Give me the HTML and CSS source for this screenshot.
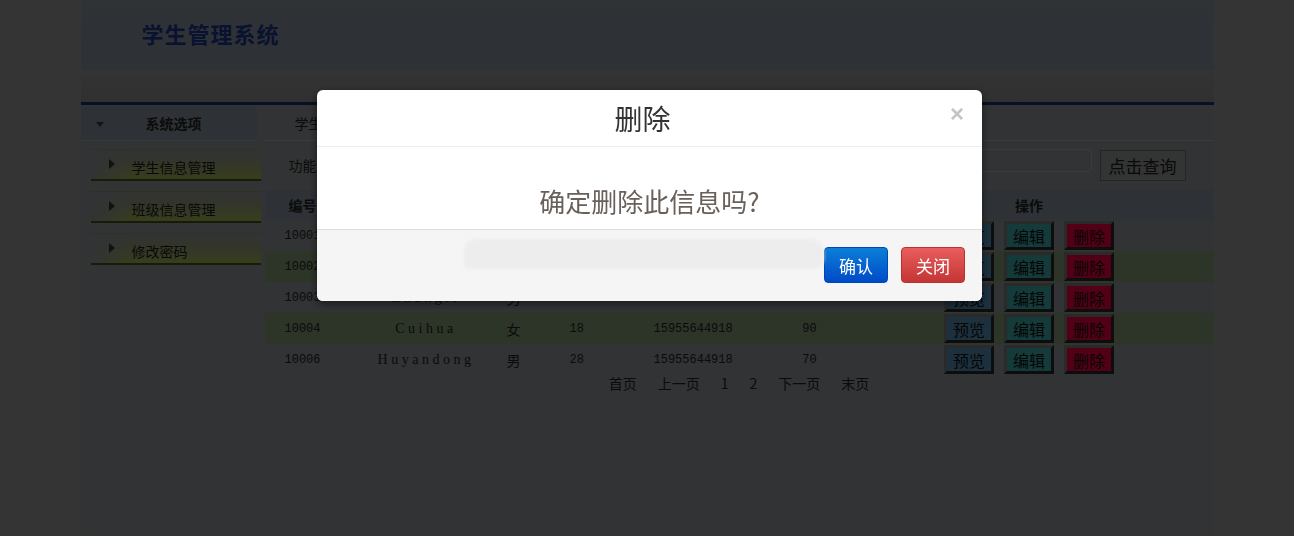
FILE: index.html
```html
<!DOCTYPE html>
<html lang="zh-CN">
<head>
    <meta charset="UTF-8">
    <meta name="viewport" content="width=device-width, initial-scale=1.0">
    <title>学生管理系统</title>
    <link rel="stylesheet" href="styles.css">
</head>
<body>
    <div class="wrap">
        <div class="top"><h1>学生管理系统</h1></div>
        <div class="bar"></div>
        <div class="main">
            <!-- 左侧菜单 -->
            <div class="side">
                <div class="side-head"><span class="down"></span>系统选项</div>
                <ul class="menu">
                    <li>学生信息管理</li>
                    <li>班级信息管理</li>
                    <li>修改密码</li>
                </ul>
            </div>
            <!-- 右侧内容 -->
            <div class="content">
                <div class="tab">学生信息管理</div>
                <div class="search">
                    <span class="tip">功能导航：学生信息列表</span>
                    <input type="text" class="kw">
                    <button class="btn-query">点击查询</button>
                </div>
                <table class="list">
                    <colgroup>
                        <col class="c-id"><col class="c-name"><col class="c-sex"><col class="c-age">
                        <col class="c-tel"><col class="c-score"><col>
                    </colgroup>
                    <tr class="head">
                        <th class="l">编号</th><th>姓名</th><th>性别</th><th class="l">年龄</th>
                        <th class="l">电话</th><th>成绩</th><th class="ops">操作</th>
                    </tr>
                    <tr>
                        <td class="l num">10001</td><td class="name">Zhangsan</td><td>男</td><td class="l num">20</td>
                        <td class="l num">15955644918</td><td class="num score">85</td>
                        <td class="ops"><button class="op see">预览</button><button class="op edit">编辑</button><button class="op del">删除</button></td>
                    </tr>
                    <tr class="alt">
                        <td class="l num">10002</td><td class="name">Lisi</td><td>女</td><td class="l num">19</td>
                        <td class="l num">15955644918</td><td class="num score">88</td>
                        <td class="ops"><button class="op see">预览</button><button class="op edit">编辑</button><button class="op del">删除</button></td>
                    </tr>
                    <tr>
                        <td class="l num">10003</td><td class="name">Zhangli</td><td>男</td><td class="l num">21</td>
                        <td class="l num">15955644918</td><td class="num score">76</td>
                        <td class="ops"><button class="op see">预览</button><button class="op edit">编辑</button><button class="op del">删除</button></td>
                    </tr>
                    <tr class="alt">
                        <td class="l num">10004</td><td class="name">Cuihua</td><td>女</td><td class="l num">18</td>
                        <td class="l num">15955644918</td><td class="num score">90</td>
                        <td class="ops"><button class="op see">预览</button><button class="op edit">编辑</button><button class="op del">删除</button></td>
                    </tr>
                    <tr>
                        <td class="l num">10006</td><td class="name">Huyandong</td><td>男</td><td class="l num">28</td>
                        <td class="l num">15955644918</td><td class="num score">70</td>
                        <td class="ops"><button class="op see">预览</button><button class="op edit">编辑</button><button class="op del">删除</button></td>
                    </tr>
                </table>
                <div class="pager">
                    <a>首页</a><a>上一页</a><a>1</a><a>2</a><a>下一页</a><a>末页</a>
                </div>
            </div>
        </div>
    </div>

    <!-- 删除确认弹窗 -->
    <div class="backdrop"></div>
    <div class="modal">
        <div class="modal-head">
            <h3>删除</h3>
            <span class="close">&times;</span>
        </div>
        <div class="modal-body">确定删除此信息吗?</div>
        <div class="modal-foot">
            <span class="blurred"></span>
            <button class="btn btn-ok">确认</button>
            <button class="btn btn-close">关闭</button>
        </div>
    </div>
</body>
</html>
```

FILE: styles.css
```css
body {
    margin: 0;
    background: #959595;
    font-family: "Noto Sans CJK SC", sans-serif;
    font-size: 14px;
    color: #222;
}
ul {
    margin: 0;
    padding: 0;
    list-style: none;
}
.wrap {
    width: 1133px;
    min-height: 536px;
    margin: 0 auto;
    background: #8e9296;
}

/* 顶部标题 */
.top {
    height: 70px;
    padding-left: 61px;
    background: linear-gradient(#86929c, #84909a);
}
.top h1 {
    margin: 0;
    line-height: 66px;
    font-size: 22px;
    font-weight: bold;
    letter-spacing: 1px;
    color: #1b3684;
}
.bar {
    height: 35px;
    box-sizing: border-box;
    background: linear-gradient(#939393, #8a8a8a);
    border-top: 1px solid #999;
    border-bottom: 3px solid #1c2f66;
}
.main {
    display: flex;
    padding-top: 1px;
}

/* 左侧菜单 */
.side {
    width: 176px;
}
.side-head {
    position: relative;
    height: 34px;
    line-height: 34px;
    padding-left: 10px;
    text-align: center;
    font-weight: bold;
    background: #84919e;
    border-bottom: 1px solid #9aa0a6;
}
.down {
    position: absolute;
    left: 15px;
    top: 16px;
    border: 4px solid transparent;
    border-top: 5px solid #3a3a3a;
}
.menu {
    padding: 0 0 0 10px;
}
.menu li {
    position: relative;
    height: 32px;
    line-height: 34px;
    margin-top: 8px;
    margin-right: -4px;
    padding-left: 41px;
    box-sizing: border-box;
    color: #1a1a1a;
    background:
        linear-gradient(to right, rgba(142, 146, 150, 1), rgba(142, 146, 150, 0) 25%),
        linear-gradient(#8f9290, #939a7a 45%, #9eb050);
    border-top: 1px solid #858f6a;
    border-bottom: 2px solid #3e5419;
}
.menu li + li {
    margin-top: 10px;
}
.menu li::before {
    content: "";
    position: absolute;
    left: 18px;
    top: 9px;
    border: 5px solid transparent;
    border-left: 6px solid #333;
    border-right: 0;
}

/* 右侧内容 */
.content {
    flex: 1;
    margin-left: 8px;
}
.tab {
    height: 34px;
    line-height: 34px;
    padding-left: 30px;
    border-bottom: 1px solid #a4a8ac;
}
.search {
    display: flex;
    align-items: center;
    height: 34px;
    margin-top: 7px;
    padding: 0 28px 0 24px;
}
.tip {
    flex: 1;
}
.kw {
    width: 150px;
    height: 23px;
    margin-top: -10px;
    box-sizing: border-box;
    border: 1px solid #a6aaae;
    border-radius: 4px;
    background: #8e9296;
}
.btn-query {
    width: 86px;
    height: 31px;
    margin-left: 8px;
    font-family: inherit;
    font-size: 17px;
    color: #1a1a1a;
    background: #929496;
    border: 1px solid #6a6a6a;
}

/* 学生列表 */
.list {
    width: 100%;
    margin-top: 8px;
    border-collapse: collapse;
    table-layout: fixed;
}
.c-id { width: 104px; }
.c-name { width: 115px; }
.c-sex { width: 60px; }
.c-age { width: 75px; }
.c-tel { width: 140px; }
.c-score { width: 90px; }
.list th {
    height: 30px;
    padding: 0;
    font-weight: bold;
    background: #83919f;
}
.list td {
    height: 31px;
    padding: 0;
    text-align: center;
}
.list .l {
    text-align: left;
    padding-left: 20px;
}
.list th.l {
    padding-left: 24px;
}
.list td.l + td.l {
    padding-left: 35px;
}
.list td.score {
    padding-left: 12px;
}
.list .ops {
    padding-right: 4px;
}
.list tr.alt td {
    background: #819572;
}
.num {
    font-family: "Liberation Mono", monospace;
    font-size: 12px;
}
.list td.num:nth-child(4) {
    padding-left: 26px;
}
.name {
    font-family: "Liberation Serif", serif;
    font-size: 14px;
    letter-spacing: 3.5px;
}
.op {
    width: 50px;
    height: 29px;
    margin: 0 5px;
    padding: 0;
    vertical-align: middle;
    font-family: inherit;
    font-size: 16px;
    color: #111;
    border: 3px outset #7a7a7a;
}
.see { background: #5089b1; }
.edit { background: #39a6a6; }
.del { background: #ec0040; }
.pager {
    text-align: center;
    line-height: 16px;
}
.pager a {
    margin: 0 10.5px;
}

/* 遮罩与弹窗 */
.backdrop {
    position: fixed;
    top: 0;
    left: 0;
    right: 0;
    bottom: 0;
    background: rgba(0, 0, 0, 0.65);
}
.modal {
    position: fixed;
    top: 90px;
    left: 317px;
    width: 665px;
    background: #fff;
    border-radius: 6px;
    box-shadow: 0 3px 9px rgba(0, 0, 0, 0.5);
}
.modal-head {
    position: relative;
    height: 56px;
    border-bottom: 1px solid #eee;
}
.modal-head h3 {
    margin: 0;
    padding-right: 14px;
    line-height: 56px;
    text-align: center;
    font-size: 28px;
    font-weight: normal;
    color: #333;
}
.close {
    position: absolute;
    right: 18px;
    top: 10px;
    font-family: "Liberation Sans", sans-serif;
    font-size: 24px;
    font-weight: bold;
    color: #c4c4c4;
}
.modal-body {
    height: 82px;
    padding-top: 39px;
    box-sizing: border-box;
    line-height: 30px;
    text-align: center;
    font-size: 26px;
    color: #68605a;
}
.modal-foot {
    display: flex;
    justify-content: flex-end;
    align-items: flex-start;
    height: 72px;
    padding: 17px 17px 0;
    box-sizing: border-box;
    background: #f5f5f5;
    border-top: 1px solid #ddd;
    border-radius: 0 0 6px 6px;
}
.blurred {
    width: 360px;
    height: 30px;
    margin: -8px 0 0;
    background: #ededed;
    border-radius: 12px 14px 10px 4px;
    filter: blur(1.5px);
}
.btn {
    width: 64px;
    height: 36px;
    margin-left: 13px;
    padding: 0;
    font-family: inherit;
    font-size: 17px;
    color: #fff;
    border-radius: 4px;
}
.btn-ok {
    margin-left: 0;
    background: linear-gradient(#0b7fd8, #004ac8);
    border: 1px solid #0046b4;
}
.btn-close {
    background: linear-gradient(#e95d5d, #c43636);
    border: 1px solid #b83232;
}
```
